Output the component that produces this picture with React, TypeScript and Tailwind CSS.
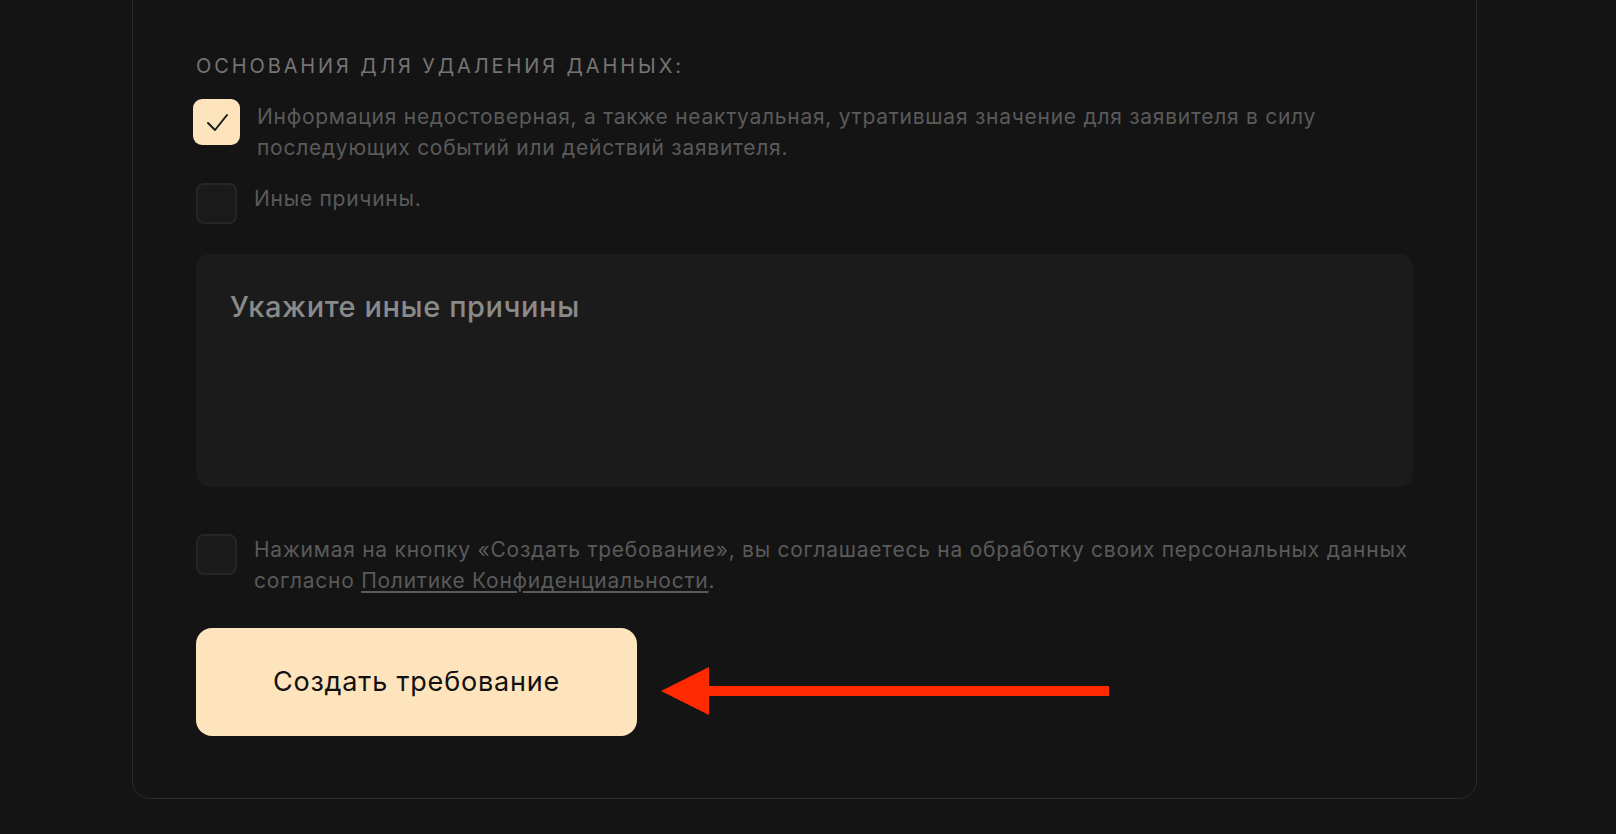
import React from "react";

function CheckIcon() {
  return (
    <svg width="26" height="26" viewBox="0 0 26 26" fill="none">
      <path d="M4 14l7 7L23 6" stroke="#1a1a1a" strokeWidth="2" strokeLinecap="round" strokeLinejoin="round" />
    </svg>
  );
}

function Box({ checked }: { checked?: boolean }) {
  if (checked) {
    return (
      <div className="flex h-[46px] w-[47px] shrink-0 -ml-[3px] -mt-[2px] items-center justify-center rounded-[9px] bg-[#fde4bd]">
        <CheckIcon />
      </div>
    );
  }
  return <div className="h-[41px] w-[41px] shrink-0 rounded-[8px] border-2 border-[#262626] bg-[#1a1a1a]" />;
}

export default function App() {
  return (
    <div
      className="flex min-h-[834px] w-full flex-col bg-[#141414] pl-[132px] pr-[139px]"
      style={{ fontFamily: "Inter, 'Noto Sans', sans-serif" }}
    >
      <div className="-mt-[20px] rounded-[18px] border border-[#2c2c2c] bg-[#141414] px-[63px] pb-[62px] pt-[73px]">
        <div className="text-[20px] leading-[24px] tracking-[0.145em] text-[#747474]">
          ОСНОВАНИЯ ДЛЯ УДАЛЕНИЯ ДАННЫХ:
        </div>

        <div className="mt-[23px] flex gap-[17px]">
          <Box checked />
          <p className="text-[21px] leading-[31px] tracking-[0.035em] text-[#5a5a5a]">
            Информация недостоверная, а также неактуальная, утратившая значение для заявителя в силу
            <br />
            последующих событий или действий заявителя.
          </p>
        </div>

        <div className="mt-[20px] flex gap-[17px]">
          <Box />
          <p className="text-[21px] leading-[31px] tracking-[0.035em] text-[#5a5a5a]">Иные причины.</p>
        </div>

        <div className="mt-[30px] h-[233px] w-[1217px] rounded-[14px] bg-[#1b1b1b] px-[34px] pt-[36px]">
          <div className="text-[29px] font-medium leading-[34px] tracking-[0.02em] text-[#8a8a8a]">Укажите иные причины</div>
        </div>

        <div className="mt-[47px] flex gap-[17px]">
          <Box />
          <p className="text-[21px] leading-[31px] tracking-[0.035em] text-[#5a5a5a]">
            Нажимая на кнопку «Создать требование», вы соглашаетесь на обработку своих персональных данных
            <br />
            согласно <span className="underline underline-offset-[3px]">Политике Конфиденциальности</span>.
          </p>
        </div>

        <div className="mt-[32px] flex items-start">
          <button className="flex h-[108px] w-[441px] items-center justify-center rounded-[16px] bg-[#fde4bd] text-[27px] tracking-[0.03em] text-[#111111]">
            Создать требование
          </button>
          <svg className="ml-[24px] mt-[39px]" width="448" height="48" viewBox="0 0 448 48">
            <polygon points="0,24 48,0 48,48" fill="#ff2a00" />
            <rect x="46" y="19" width="402" height="10" fill="#ff2a00" />
          </svg>
        </div>
      </div>
    </div>
  );
}
